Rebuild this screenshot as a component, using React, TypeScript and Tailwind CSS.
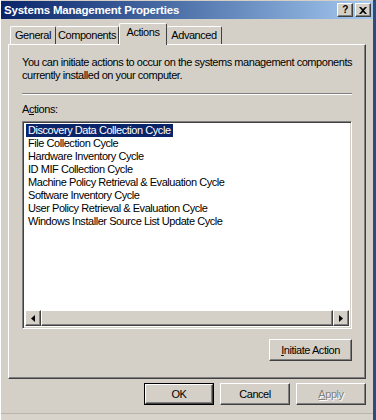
const items = [
  "Discovery Data Collection Cycle",
  "File Collection Cycle",
  "Hardware Inventory Cycle",
  "ID MIF Collection Cycle",
  "Machine Policy Retrieval & Evaluation Cycle",
  "Software Inventory Cycle",
  "User Policy Retrieval & Evaluation Cycle",
  "Windows Installer Source List Update Cycle",
];

const raised =
  "border border-t-white border-l-white border-r-[#404040] border-b-[#404040] shadow-[inset_-1px_-1px_0_#808080]";

function Button({ children, className = "" }: { children: React.ReactNode; className?: string }) {
  return (
    <div className={`flex items-center justify-center bg-[#d4d0c8] ${raised} ${className}`}>
      {children}
    </div>
  );
}

export default function App() {
  return (
    <div className="flex h-[420px] w-[376px] overflow-hidden bg-[#2b4d7e] font-['Liberation_Sans',Arial,sans-serif] text-[11px] leading-[13px] tracking-[-0.45px] text-black">
      <div className="flex w-[373px] flex-col border-l border-l-white bg-[#d4d0c8]">
        {/* title bar */}
        <div className="mt-[1px] flex h-[18px] items-center bg-gradient-to-r from-[#0a246a] to-[#a6caf0] pl-[3px] pr-[2px]">
          <span className="flex-1 text-[11.5px] font-bold tracking-[-0.2px] text-white">
            Systems Management Properties
          </span>
          <div className="flex gap-[2px]">
            <Button className="h-[14px] w-[16px] text-[10px] font-bold leading-none">?</Button>
            <Button className="h-[14px] w-[16px]">
              <svg width="8" height="7" viewBox="0 0 8 7">
                <path d="M0 0h2l2 2 2-2h2L5 3.5 8 7H6L4 5 2 7H0l3-3.5z" fill="#000" />
              </svg>
            </Button>
          </div>
        </div>

        {/* tabs */}
        <div className="mt-[4px] flex h-[21px] items-end pl-[9px]">
          <div className="flex h-[18px] w-[46px] items-center justify-center rounded-t-[2px] border-l border-t border-r border-t-white border-l-white border-r-[#404040]">
            General
          </div>
          <div className="flex h-[18px] w-[63px] items-center justify-center rounded-t-[2px] border-t border-r border-t-white border-r-[#404040]">
            Components
          </div>
          <div className="relative z-10 -mb-[1px] flex h-[22px] w-[48px] items-start justify-center rounded-t-[2px] border-l border-t border-r border-t-white border-l-white border-r-[#404040] bg-[#d4d0c8] pt-[2px]">
            Actions
          </div>
          <div className="flex h-[18px] w-[55px] items-center justify-center rounded-t-[2px] border-t border-r border-t-white border-r-[#404040]">
            Advanced
          </div>
        </div>

        {/* panel */}
        <div className={`ml-[7px] flex h-[335px] w-[358px] flex-col px-[13px] pt-[11px] ${raised}`}>
          <p className="-mr-[8px]">
            You can initiate actions to occur on the systems management components currently installed on your computer.
          </p>
          <div className="mt-[11px] h-[2px] border-t border-b border-t-[#808080] border-b-white" />
          <div className="mt-[8px]">
            A<span className="underline">c</span>tions:
          </div>
          <div className="mt-[5px] flex h-[208px] flex-col border border-t-[#808080] border-l-[#808080] border-r-white border-b-white bg-white shadow-[inset_1px_1px_0_#404040,inset_-1px_-1px_0_#d4d0c8]">
            <div className="flex flex-1 flex-col pl-[3px] pt-[2px]">
              {items.map((it, i) => (
                <div key={it} className="flex h-[13px]">
                  <span className={`px-[2px] ${i === 0 ? "bg-[#0a246a] text-white outline outline-1 outline-dotted outline-[#fff]" : ""}`}>
                    {it}
                  </span>
                </div>
              ))}
            </div>
            <div className="mx-[2px] mb-[2px] flex h-[16px]">
              <Button className="h-[16px] w-[16px]">
                <svg width="4" height="7" viewBox="0 0 4 7">
                  <path d="M4 0v7L0 3.5z" fill="#000" />
                </svg>
              </Button>
              <Button className="h-[16px] flex-1">{""}</Button>
              <Button className="h-[16px] w-[16px]">
                <svg width="4" height="7" viewBox="0 0 4 7">
                  <path d="M0 0v7l4-3.5z" fill="#000" />
                </svg>
              </Button>
            </div>
          </div>
          <div className="mt-[10px] flex justify-end">
            <Button className="h-[22px] w-[83px]">
              <span>
                <span className="underline">I</span>nitiate Action
              </span>
            </Button>
          </div>
        </div>

        {/* dialog buttons */}
        <div className="mt-[4px] flex justify-end gap-[6px] pr-[7px]">
          <div className="h-[22px] w-[70px] border border-black">
            <Button className="h-full w-full">OK</Button>
          </div>
          <Button className="h-[22px] w-[70px]">Cancel</Button>
          <Button className="h-[22px] w-[70px] text-[#808080] [text-shadow:1px_1px_0_#fff]">
            <span>
              <span className="underline">A</span>pply
            </span>
          </Button>
        </div>
        <div className="mt-auto h-[7px] border-t border-t-[#b8b4ac] bg-[#d8d4cc]" />
      </div>
    </div>
  );
}
